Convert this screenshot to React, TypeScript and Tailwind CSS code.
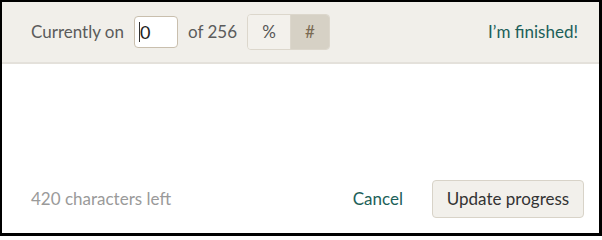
import React from "react";

export default function App() {
  return (
    <div
      className="w-[602px] h-[236px] box-border border-black border-t-2 border-l-2 border-r-[3px] border-b-[3px] bg-white flex flex-col"
      style={{ fontFamily: "Lato, 'Open Sans', sans-serif" }}
    >
      <div className="h-[62px] shrink-0 bg-[#f1efea] border-b-2 border-[#e4e1db] flex items-center pl-[29px] pr-[21px] text-[17px]">
        <span className="text-[#5b5b5b]">Currently on</span>
        <div className="ml-[10px] w-[44px] h-[32px] box-border bg-white border border-[#c9bfae] rounded-[4px] flex items-center pl-[4px]">
          <span className="w-px h-[20px] bg-[#333]" />
          <span className="text-[#222] text-[18px] leading-none">0</span>
        </div>
        <span className="ml-[10px] text-[#5b5b5b]">of 256</span>
        <div className="ml-[10px] h-[36px] box-border border border-[#dcd7cc] rounded-[4px] flex overflow-hidden">
          <div className="w-[43px] bg-[#f3f1ec] border-r border-[#dcd7cc] flex items-center justify-center text-[#555]">%</div>
          <div className="w-[38px] bg-[#d6d1c5] flex items-center justify-center text-[#7a6a52]">#</div>
        </div>
        <span className="ml-auto text-[#1c5f59]">I’m finished!</span>
      </div>
      <div className="flex-1 flex flex-col justify-end pb-[15px] pl-[29px] pr-[15px]">
        <div className="flex items-center text-[17px]">
          <span className="text-[#9a9a9a]">420 characters left</span>
          <span className="ml-auto text-[#1c5f59]">Cancel</span>
          <button className="ml-[29px] w-[152px] h-[38px] box-border bg-[#f2f0eb] border border-[#d8d3c8] rounded-[4px] text-[#333] text-[17px]">
            Update progress
          </button>
        </div>
      </div>
    </div>
  );
}
